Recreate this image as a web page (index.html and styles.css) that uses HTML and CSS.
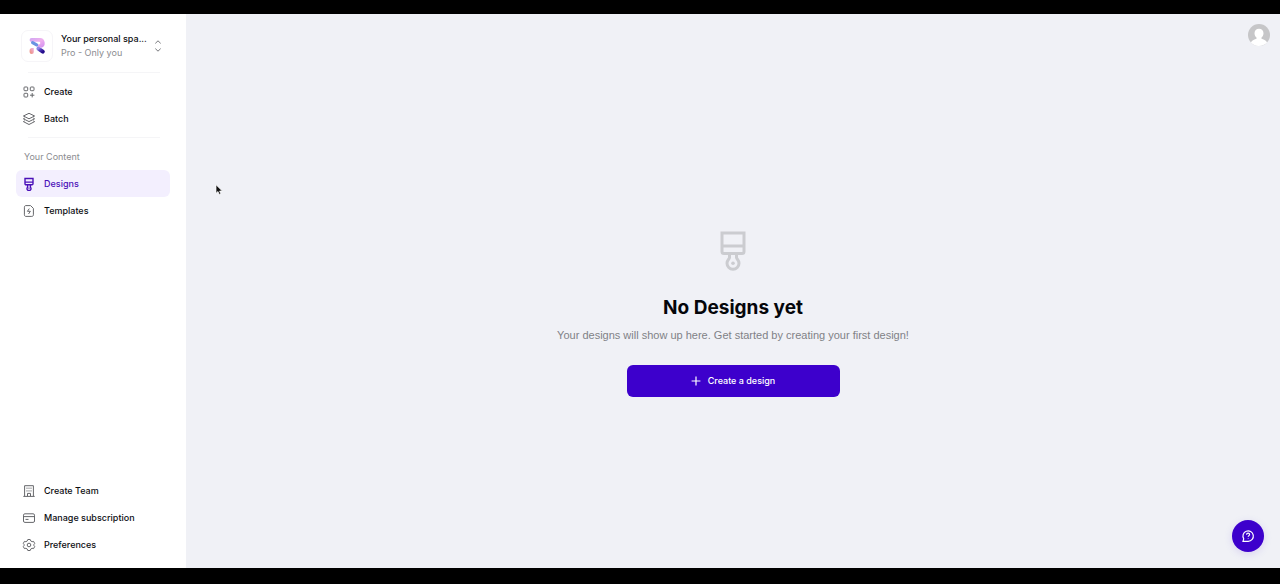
FILE: index.html
```
<!DOCTYPE html>
<html lang="en">
<head>
<meta charset="utf-8">
<meta name="viewport" content="width=device-width, initial-scale=1">
<title>Designs</title>
<link rel="stylesheet" href="styles.css">
</head>
<body>
<div class="app">
  <aside class="sidebar">
    <button class="space" type="button">
      <span class="space-logo">
        <svg width="18" height="18" viewBox="0 0 18 18" aria-hidden="true">
          <defs>
            <linearGradient id="bowl" x1="0" y1="0" x2="1" y2="1"><stop offset="0" stop-color="#cfa6f2"/><stop offset=".5" stop-color="#f0b0ee"/><stop offset="1" stop-color="#d08cf0"/></linearGradient>
            <linearGradient id="foot" x1="1" y1="0" x2="0" y2="1"><stop offset="0" stop-color="#eeb4e4"/><stop offset="1" stop-color="#ee8a70"/></linearGradient>
            <linearGradient id="leg" x1="0" y1="0" x2="1" y2="1"><stop offset="0" stop-color="#8f86e8"/><stop offset=".5" stop-color="#4a35b4"/><stop offset="1" stop-color="#240c8a"/></linearGradient>
          </defs>
          <path d="M3.500 1h8.300a5 5 0 0 1 1.600 9.700L9 9.200 6 7.400h5a1.300 1.300 0 0 0 0-2.600H3.500a1.900 1.900 0 0 1 0-3.800z" fill="url(#bowl)"/>
          <path d="M1.600 15v-1.400c0-1.600 1-2.500 2.400-2.500h1.800V15a2.100 2.100 0 0 1-4.200 0z" fill="url(#foot)"/>
          <path d="m4.600 5.600 4 2.300" stroke="#6a92e2" stroke-width="3.200" stroke-linecap="round"/>
          <path d="m10.400 11.600 4.400 3.100" stroke="url(#leg)" stroke-width="4" stroke-linecap="round"/>
        </svg>
      </span>
      <span class="space-text">
        <span class="space-name">Your personal spa...</span>
        <span class="space-plan">Pro - Only you</span>
      </span>
      <svg class="space-arrows" width="8" height="14" viewBox="0 0 8 14" aria-hidden="true"><path d="m1.300 4.400 2.700-2.600 2.700 2.600M1.300 9.600 4 12.200l2.700-2.600"/></svg>
    </button>
    <hr class="rule">
    <nav class="nav">
      <a class="item" href="#create">
        <svg class="icon" viewBox="0 0 14 14" aria-hidden="true"><rect x="2" y="2" width="3.700" height="3.700" rx=".8"/><rect x="8.300" y="2" width="3.700" height="3.700" rx=".8"/><rect x="2" y="8.300" width="3.700" height="3.700" rx=".8"/><path d="M10.200 8v4.400M8 10.200h4.400"/></svg>
        Create</a>
      <a class="item" href="#batch">
        <svg class="icon" viewBox="0 0 14 14" aria-hidden="true"><path d="M7 1.300 12.600 4 7 6.800 1.400 4z"/><path d="M2.800 6 1.400 6.800 7 9.600l5.600-2.800L11.200 6M2.800 8.800l-1.400.8L7 12.500l5.600-2.900-1.400-.8"/></svg>
        Batch</a>
    </nav>
    <hr class="rule">
    <h2 class="label">Your Content</h2>
    <nav class="nav">
      <a class="item item-active" href="#designs" aria-current="page">
        <svg class="icon" viewBox="0 0 14 14" aria-hidden="true"><path d="M3 1.500h8v5.300a1 1 0 0 1-1 1H4a1 1 0 0 1-1-1zM3 5.100h8M5.600 7.800v2.400a2 2 0 1 0 2.800 0V7.800"/><circle cx="7" cy="11.300" r=".2"/></svg>
        Designs</a>
      <a class="item" href="#templates">
        <svg class="icon" viewBox="0 0 14 14" aria-hidden="true"><path d="M4 1.600h4.600l2.800 2.800v6.400c0 1-.6 1.600-1.600 1.600H4c-1 0-1.600-.6-1.600-1.600V3.200c0-1 .6-1.600 1.600-1.600z"/><path d="M7.300 4.600 5.400 7.300h3L6.500 10"/></svg>
        Templates</a>
    </nav>
    <nav class="nav nav-bottom">
      <a class="item" href="#team">
        <svg class="icon" viewBox="0 0 14 14" aria-hidden="true"><path d="M2.600 12.300V1.700h8.800v10.600M1.300 12.400h11.400M5.500 12.200V9.400h3v2.800M5 3.600v1.200M7 3.600v1.200M9 3.600v1.200M5 6.300v1.200M7 6.300v1.200M9 6.300v1.200"/></svg>
        Create Team</a>
      <a class="item" href="#subscription">
        <svg class="icon" viewBox="0 0 14 14" aria-hidden="true"><rect x="1.500" y="2.800" width="11" height="8.600" rx="1.400"/><path d="M1.500 5.600h11M3.500 8.400h3"/></svg>
        Manage subscription</a>
      <a class="item" href="#preferences">
        <svg class="icon" viewBox="0 0 14 14" aria-hidden="true"><path d="M5.800 1.500h2.400l.5 1.400 1.400.8 1.500-.3 1.100 2.100L11.800 6.700v.6l.9 1.200-1.100 2.100-1.500-.3-1.400.8-.5 1.400H5.800l-.5-1.400-1.400-.8-1.500.3-1.100-2.100.9-1.200v-.6l-.9-1.200 1.100-2.100 1.500.3 1.400-.8z" stroke-linejoin="round"/><circle cx="7" cy="7" r="1.800"/></svg>
        Preferences</a>
    </nav>
  </aside>
  <main class="main">
    <header class="topbar">
      <button class="avatar" type="button" aria-label="Account">
        <svg width="22" height="22" viewBox="0 0 22 22" aria-hidden="true"><circle cx="11" cy="11" r="11" fill="#c6c6c8"/><path d="M11 4.800c-2.800 0-4.500 1.900-4.500 4.400 0 1.900.8 3.400 2 4.200v1.300c-1.800.6-4.600 1.300-5.600 3.900A10.700 10.700 0 0 0 11 22c3 0 6-1.300 8.100-3.400-1-2.600-3.800-3.300-5.600-3.900v-1.300c1.200-.8 2-2.300 2-4.200 0-2.500-1.700-4.400-4.500-4.400z" fill="#fff"/></svg>
      </button>
    </header>
    <section class="empty">
      <svg class="empty-icon" width="28" height="42" viewBox="0 0 28 42" aria-hidden="true"><path d="M3 3h22v18.500a2 2 0 0 1-2 2H5a2 2 0 0 1-2-2zM3 16h22M10.500 24v3.500c0 1.500-2.500 2.500-2.500 5.800a6 6 0 0 0 12 0c0-3.300-2.500-4.300-2.500-5.800V24"/><circle class="empty-dot" cx="14" cy="33.300" r="1.800"/></svg>
      <h1 class="title">No Designs yet</h1>
      <p class="description">Your designs will show up here. Get started by creating your first design!</p>
      <button class="primary" type="button">
        <svg width="10" height="10" viewBox="0 0 10 10" aria-hidden="true"><path d="M5 .6v8.800M.6 5h8.800"/></svg>
        Create a design
      </button>
    </section>
    <button class="help" type="button" aria-label="Help">
      <svg width="14" height="14" viewBox="0 0 14 14" aria-hidden="true"><path d="M2 12.300h5.200A5.200 5.200 0 1 0 2.700 9.800zM5.600 5.700c0-.9.600-1.500 1.500-1.500s1.500.6 1.500 1.400c0 1-1.400 1.100-1.400 2.200M7.200 9.300v.4"/></svg>
    </button>
    <svg class="cursor" width="9" height="13" viewBox="0 0 9 13" aria-hidden="true"><path d="M1 .8v8.500l2-1.800 1.300 3 1.500-.7-1.200-2.800h2.700z" fill="#111" stroke="#fff" stroke-width=".7"/></svg>
  </main>
</div>
</body>
</html>
```
FILE: styles.css
```
* {
  box-sizing: border-box;
}

body {
  margin: 0;
  background: #000;
  color: #0d0e12;
  font-family: Inter, "Liberation Sans", sans-serif;
  font-size: 9px;
  line-height: 14px;
}

button {
  border: 0;
  padding: 0;
  background: none;
  color: inherit;
  font: inherit;
  cursor: pointer;
}

svg {
  flex: none;
  fill: none;
}

.app {
  display: flex;
  min-height: 100vh;
  padding: 14px 0 16px;
}

.sidebar {
  display: flex;
  flex-direction: column;
  flex: none;
  width: 186px;
  padding: 16px 16px 10px;
  background: #fff;
}

.space {
  display: flex;
  align-items: center;
  gap: 8px;
  padding: 0 8px 0 5px;
  text-align: left;
}

.space-logo {
  display: grid;
  place-items: center;
  flex: none;
  width: 32px;
  height: 32px;
  border: 1px solid #f6f5f8;
  border-radius: 7px;
}

.space-text {
  flex: 1;
  min-width: 0;
}

.space-name,
.space-plan {
  display: block;
  white-space: nowrap;
}

.space-name {
  font-weight: 500;
}

.space-plan {
  color: #8b8c90;
}

.space-arrows {
  stroke: #77787c;
}

.rule {
  width: 132px;
  height: 1px;
  margin: 10px 0 5px 12px;
  border: 0;
  background: #f5f5f7;
}

.nav + .rule {
  margin: 5px 0 12px 12px;
}

.label {
  margin: 0 0 6px 8px;
  color: #8b8c90;
  font-size: 9px;
  font-weight: 400;
}

.nav {
  display: flex;
  flex-direction: column;
}

.nav-bottom {
  margin-top: auto;
}

.item {
  display: flex;
  align-items: center;
  gap: 8px;
  height: 27px;
  padding: 0 6px;
  border-radius: 6px;
  color: inherit;
  font-weight: 500;
  text-decoration: none;
}

.item-active {
  background: #f3effe;
  color: #4a10b8;
}

.icon {
  width: 14px;
  height: 14px;
  stroke: #66676b;
}

.item-active .icon {
  stroke: #4a10b8;
  stroke-width: 1.4;
}

.main {
  position: relative;
  display: flex;
  flex-direction: column;
  flex: 1;
  min-width: 0;
  background: #f0f1f6;
}

.topbar {
  display: flex;
  justify-content: flex-end;
  padding: 10px 10px 12px;
}

.avatar {
  height: 22px;
}

.empty {
  display: flex;
  flex: 1;
  flex-direction: column;
  align-items: center;
  justify-content: center;
  text-align: center;
}

.empty-icon {
  stroke: #cbccd0;
  stroke-width: 3;
}

.empty-dot {
  fill: #cbccd0;
  stroke: none;
}

.title {
  margin: 24px 0 7px;
  color: #05060a;
  font-size: 19px;
  font-weight: 700;
  line-height: 24px;
}

.description {
  margin: 0 0 22px;
  color: #808186;
  font-family: "Liberation Sans", Arial, sans-serif;
  font-size: 11px;
  line-height: 16px;
}

.primary {
  display: flex;
  align-items: center;
  justify-content: center;
  gap: 7px;
  width: 213px;
  height: 32px;
  border-radius: 6px;
  background: #3d00cc;
  color: #fff;
  font-weight: 500;
}

.primary svg,
.help svg {
  stroke: #fff;
  stroke-width: 1.2;
}

.help {
  position: absolute;
  right: 16px;
  bottom: 16px;
  display: grid;
  place-items: center;
  width: 32px;
  height: 32px;
  border-radius: 50%;
  background: #3d00cc;
  box-shadow: 0 2px 8px #3d00cc20;
}

.cursor {
  position: absolute;
  top: 170px;
  left: 29px;
}
```
